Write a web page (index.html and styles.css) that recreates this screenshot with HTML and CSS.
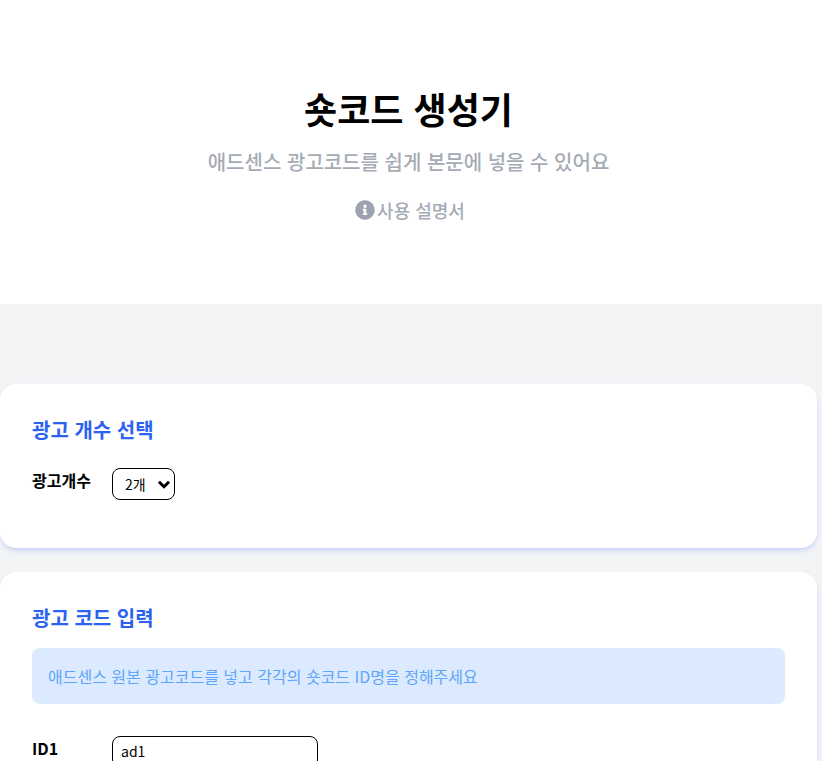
FILE: index.html
```html
<!DOCTYPE html>
<html lang="ko">
<head>
<meta charset="utf-8">
<title>숏코드 생성기</title>
<link rel="stylesheet" href="styles.css">
</head>
<body>
<header class="hero">
  <h1 class="hero-title">숏코드 생성기</h1>
  <p class="hero-sub">애드센스 광고코드를 쉽게 본문에 넣을 수 있어요</p>
  <a class="hero-link" href="#">
    <svg class="info-icon" viewBox="0 0 512 512" aria-hidden="true"><path d="M256 8C119 8 8 119 8 256s111 248 248 248 248-111 248-248S393 8 256 8zm0 110a42 42 0 1 1 0 84 42 42 0 0 1 0-84zm56 254c0 7-5 12-12 12h-88c-7 0-12-5-12-12v-24c0-7 5-12 12-12h12v-64h-12c-7 0-12-5-12-12v-24c0-7 5-12 12-12h64c7 0 12 5 12 12v100h12c7 0 12 5 12 12v24z"/></svg>
    <span>사용 설명서</span>
  </a>
</header>
<main class="content">
  <section class="card">
    <h2 class="card-title card-title-wide">광고 개수 선택</h2>
    <div class="field count-field">
      <label class="field-label">광고개수</label>
      <div class="select-wrap">
        <select class="count-select"><option>2개</option></select>
        <svg class="select-arrow" viewBox="0 0 12 8" aria-hidden="true"><path d="M1.5 1.5 6 6l4.5-4.5"/></svg>
      </div>
    </div>
  </section>
  <section class="card">
    <h2 class="card-title">광고 코드 입력</h2>
    <div class="notice">애드센스 원본 광고코드를 넣고 각각의 숏코드 ID명을 정해주세요</div>
    <div class="field id-field">
      <label class="field-label">ID1</label>
      <input class="id-input" type="text" value="ad1">
    </div>
  </section>
</main>
</body>
</html>
```
FILE: styles.css
```css
* { box-sizing: border-box; }
html, body { margin: 0; height: 761px; overflow: hidden; }
body {
  background: #f3f4f6;
  color: #000;
  font-family: "Noto Sans CJK KR", "Noto Sans", sans-serif;
}
.hero {
  background: #fff;
  height: 304px;
  padding: 78px 5px 0 0;
  text-align: center;
}
.hero-title {
  margin: 0;
  font-size: 36px;
  line-height: 60px;
  font-weight: 700;
}
.hero-sub {
  margin: 8px 0 0;
  font-size: 20px;
  line-height: 32px;
  font-weight: 500;
  color: #a5abb6;
}
.hero-link {
  margin: 18px 0 0 3px;
  display: inline-flex;
  align-items: center;
  gap: 2px;
  font-size: 18px;
  line-height: 28px;
  font-weight: 500;
  color: #a5abb6;
  text-decoration: none;
}
.info-icon { width: 20px; height: 20px; fill: #9ca3af; }
.content {
  width: 817px;
  padding-top: 80px;
  display: flex;
  flex-direction: column;
  gap: 24px;
}
.card {
  background: #fff;
  border-radius: 16px;
  padding: 32px;
  box-shadow: 0 4px 6px -1px rgba(37, 99, 235, 0.16), 0 2px 4px -2px rgba(37, 99, 235, 0.16);
}
.card-title {
  margin: 0 0 16px;
  font-size: 20px;
  line-height: 28px;
  font-weight: 700;
  color: #2b63f0;
}
.card-title-wide { margin-bottom: 24px; }
.field { display: flex; align-items: flex-start; }
.count-field { margin-bottom: 16px; }
.field-label {
  width: 80px;
  font-size: 16px;
  line-height: 24px;
  font-weight: 700;
  flex: none;
}
.select-wrap { position: relative; width: 63px; height: 32px; }
.count-select {
  appearance: none;
  width: 100%;
  height: 100%;
  padding: 0 20px 0 12px;
  border: 1px solid #000;
  border-radius: 8px;
  background: #fff;
  color: #000;
  font: 400 14px "Noto Sans CJK KR", sans-serif;
}
.select-arrow {
  position: absolute;
  right: 4px;
  top: 12px;
  width: 14px;
  height: 9px;
  fill: none;
  stroke: #000;
  stroke-width: 2.6;
  pointer-events: none;
}
.notice {
  background: #dbeafe;
  color: #60a5fa;
  border-radius: 8px;
  height: 56px;
  padding: 0 16px;
  display: flex;
  align-items: center;
  font-size: 16px;
}
.id-field { margin-top: 32px; }
.id-input {
  width: 206px;
  height: 32px;
  padding: 0 8px 2px;
  border: 1px solid #000;
  border-radius: 8px;
  background: #fff;
  color: #000;
  font: 400 14px "Noto Sans CJK KR", sans-serif;
}
```
